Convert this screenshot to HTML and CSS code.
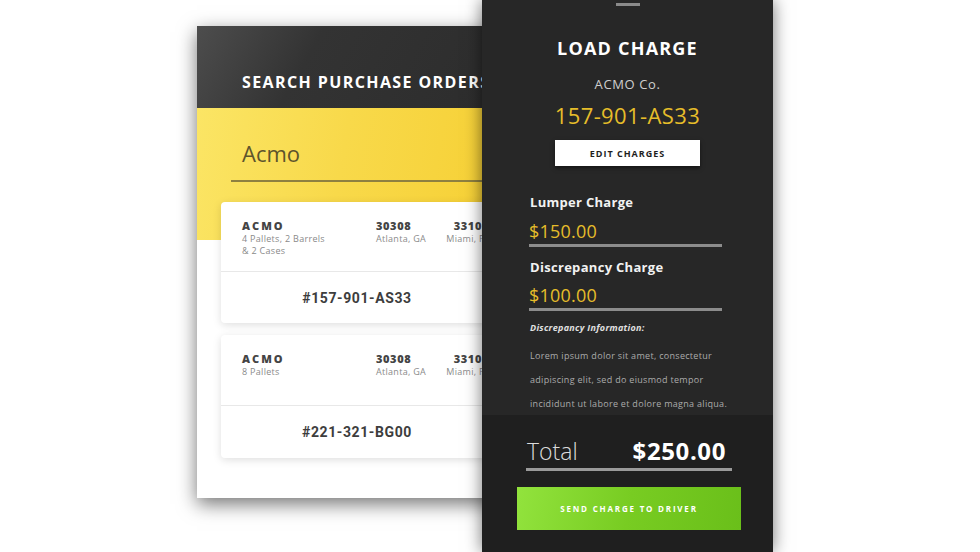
FILE: index.html
```html
<!DOCTYPE html>
<html>
<head>
<meta charset="utf-8">
<link rel="stylesheet" href="styles.css">
</head>
<body>
<div class="stage">
  <section class="search-panel">
    <header class="search-header">SEARCH PURCHASE ORDERS</header>
    <div class="search-body">
      <div class="search-field">Acmo</div>
      <div class="po-card">
        <div class="po-info">
          <div class="po-col">
            <div class="po-title">ACMO</div>
            <div class="po-sub">4 Pallets, 2 Barrels<br>&amp; 2 Cases</div>
          </div>
          <div class="po-col">
            <div class="po-zip">30308</div>
            <div class="po-sub">Atlanta, GA</div>
          </div>
          <div class="po-col end">
            <div class="po-zip">33101</div>
            <div class="po-sub">Miami, FL</div>
          </div>
        </div>
        <div class="po-number">#157-901-AS33</div>
      </div>
      <div class="po-card tall">
        <div class="po-info">
          <div class="po-col">
            <div class="po-title">ACMO</div>
            <div class="po-sub">8 Pallets</div>
          </div>
          <div class="po-col">
            <div class="po-zip">30308</div>
            <div class="po-sub">Atlanta, GA</div>
          </div>
          <div class="po-col end">
            <div class="po-zip">33101</div>
            <div class="po-sub">Miami, FL</div>
          </div>
        </div>
        <div class="po-number">#221-321-BG00</div>
      </div>
    </div>
  </section>

  <section class="charge-panel">
    <div class="charge-top">
      <div class="handle"></div>
      <h1 class="charge-title">LOAD CHARGE</h1>
      <div class="charge-company">ACMO Co.</div>
      <div class="charge-po">157-901-AS33</div>
      <div class="edit-btn">EDIT CHARGES</div>
      <div class="charge-form">
        <div class="field-label">Lumper Charge</div>
        <div class="field-value">$150.00</div>
        <div class="field-label second">Discrepancy Charge</div>
        <div class="field-value">$100.00</div>
        <div class="info-label">Discrepancy Information:</div>
        <p class="info-text">Lorem ipsum dolor sit amet, consectetur<br>adipiscing elit, sed do eiusmod tempor<br>incididunt ut labore et dolore magna aliqua.</p>
      </div>
    </div>
    <div class="charge-bottom">
      <div class="total-row">
        <span class="total-label">Total</span>
        <span class="total-value">$250.00</span>
      </div>
      <div class="send-btn">SEND CHARGE TO DRIVER</div>
    </div>
  </section>
</div>
</body>
</html>
```

FILE: styles.css
```css
html, body {
  margin: 0;
  padding: 0;
  background: #ffffff;
}
body {
  width: 980px;
  height: 552px;
  overflow: hidden;
  font-family: "Open Sans", "DejaVu Sans", sans-serif;
}
.stage {
  display: flex;
  align-items: flex-start;
  padding-left: 197px;
  height: 552px;
}

/* ---------- left panel ---------- */
.search-panel {
  margin-top: 26px;
  width: 320px;
  height: 472px;
  flex: none;
  background: #ffffff;
  box-shadow: 0 6px 18px rgba(0, 0, 0, 0.55);
  overflow: hidden;
}
.search-header {
  height: 82px;
  box-sizing: border-box;
  padding: 46px 0 0 45px;
  background: linear-gradient(120deg, #4d4d4d 0%, #333333 35%, #2c2c2c 100%);
  color: #ffffff;
  font-weight: 700;
  font-size: 16px;
  line-height: 20px;
  letter-spacing: 1.4px;
  white-space: nowrap;
}
.search-body {
  padding: 30px 24px 0 24px;
  background:
    linear-gradient(100deg, #fbe565 0%, #f8d94a 45%, #f6cf32 100%) top left / 100% 132px no-repeat,
    #ffffff;
}
.search-field {
  margin-left: 10px;
  padding: 0 0 12px 11px;
  border-bottom: 2px solid #8e8040;
  color: #5e542c;
  font-size: 22px;
  line-height: 30px;
  font-weight: 400;
}
.po-card {
  margin-top: 20px;
  background: #ffffff;
  border-radius: 4px;
  box-shadow: 0 2px 8px rgba(0, 0, 0, 0.13);
}
.po-card + .po-card {
  margin-top: 12px;
}
.po-info {
  display: grid;
  grid-template-columns: 134px 1fr auto;
  height: 70px;
  box-sizing: border-box;
  padding: 17px 4px 0 21px;
  border-bottom: 1px solid #e8e8e8;
  white-space: nowrap;
}
.po-col.end {
  text-align: right;
}
.po-title {
  font-size: 11px;
  line-height: 14px;
  font-weight: 800;
  letter-spacing: 2px;
  color: #444444;
}
.po-zip {
  font-size: 11px;
  line-height: 14px;
  font-weight: 800;
  letter-spacing: 0.6px;
  color: #444444;
}
.po-sub {
  font-size: 9px;
  line-height: 12px;
  color: #8a8a8a;
  letter-spacing: 0.3px;
}
.po-number {
  height: 51px;
  display: flex;
  align-items: center;
  justify-content: center;
  font-family: Roboto, "Open Sans", sans-serif;
  font-weight: 700;
  font-size: 14px;
  letter-spacing: 0.6px;
  color: #3d3d3d;
}
.po-card.tall .po-info {
  height: 71px;
}
.po-card.tall .po-number {
  height: 52px;
}

/* ---------- right panel ---------- */
.charge-panel {
  position: relative;
  z-index: 2;
  margin-left: -35px;
  width: 291px;
  height: 552px;
  flex: none;
  display: flex;
  flex-direction: column;
  box-shadow: 0 0 16px rgba(0, 0, 0, 0.55);
}
.charge-top {
  height: 415px;
  flex: none;
  overflow: hidden;
  background: #272727;
  display: flex;
  flex-direction: column;
  align-items: center;
}
.charge-top > * {
  flex: none;
}
.handle {
  margin-top: 3px;
  width: 24px;
  height: 3px;
  background: #8a8a8a;
}
.charge-title {
  margin: 31px 0 0 0;
  font-size: 18px;
  line-height: 22px;
  font-weight: 700;
  letter-spacing: 1.2px;
  color: #ffffff;
}
.charge-company {
  margin-top: 16px;
  font-size: 13px;
  line-height: 18px;
  color: #cfcfcf;
  letter-spacing: 0.6px;
}
.charge-po {
  margin-top: 8px;
  font-size: 22px;
  line-height: 28px;
  color: #e6bd2a;
  letter-spacing: 0.4px;
}
.edit-btn {
  margin-top: 11px;
  width: 145px;
  height: 26px;
  display: flex;
  align-items: center;
  justify-content: center;
  background: #ffffff;
  color: #1e1e1e;
  font-size: 9px;
  font-weight: 700;
  letter-spacing: 1px;
  box-shadow: 0 2px 4px rgba(0, 0, 0, 0.5);
}
.charge-form {
  align-self: stretch;
  margin-top: 27px;
  padding: 0 51px 0 47px;
}
.field-label {
  padding-left: 1px;
  font-size: 13px;
  line-height: 18px;
  font-weight: 700;
  color: #f2f2f2;
  letter-spacing: 0.3px;
}
.field-label.second {
  margin-top: 11px;
}
.field-value {
  margin-top: 8px;
  padding-bottom: 1px;
  border-bottom: 3px solid #8c8c8c;
  font-size: 18px;
  line-height: 24px;
  color: #e6bd2a;
  letter-spacing: 0.2px;
}
.field-label.second + .field-value {
  margin-top: 7px;
}
.info-label {
  margin-top: 11px;
  padding-left: 1px;
  font-size: 9px;
  line-height: 12px;
  font-weight: 700;
  font-style: italic;
  color: #e0e0e0;
  letter-spacing: 0.3px;
}
.info-text {
  margin: 10px -20px 0 0;
  padding-left: 1px;
  font-size: 9px;
  line-height: 24px;
  color: #ababab;
  letter-spacing: 0.3px;
  white-space: nowrap;
}
.charge-bottom {
  flex: 1;
  background: #1f1f1f;
  padding-top: 22px;
}
.total-row {
  margin: 0 41px 0 44px;
  padding: 0 6px 3px 1px;
  display: flex;
  justify-content: space-between;
  align-items: baseline;
  border-bottom: 3px solid #9a9a9a;
  line-height: 28px;
}
.total-label {
  font-size: 23px;
  font-weight: 300;
  color: #dcdcdc;
}
.total-value {
  font-size: 24px;
  font-weight: 700;
  color: #ffffff;
  letter-spacing: 0.6px;
}
.send-btn {
  margin: 16px 0 0 35px;
  width: 224px;
  height: 43px;
  display: flex;
  align-items: center;
  justify-content: center;
  background: linear-gradient(100deg, #92e33d 0%, #78cc22 50%, #6abf1a 100%);
  color: #ffffff;
  font-size: 8px;
  font-weight: 700;
  letter-spacing: 1.8px;
}
```
